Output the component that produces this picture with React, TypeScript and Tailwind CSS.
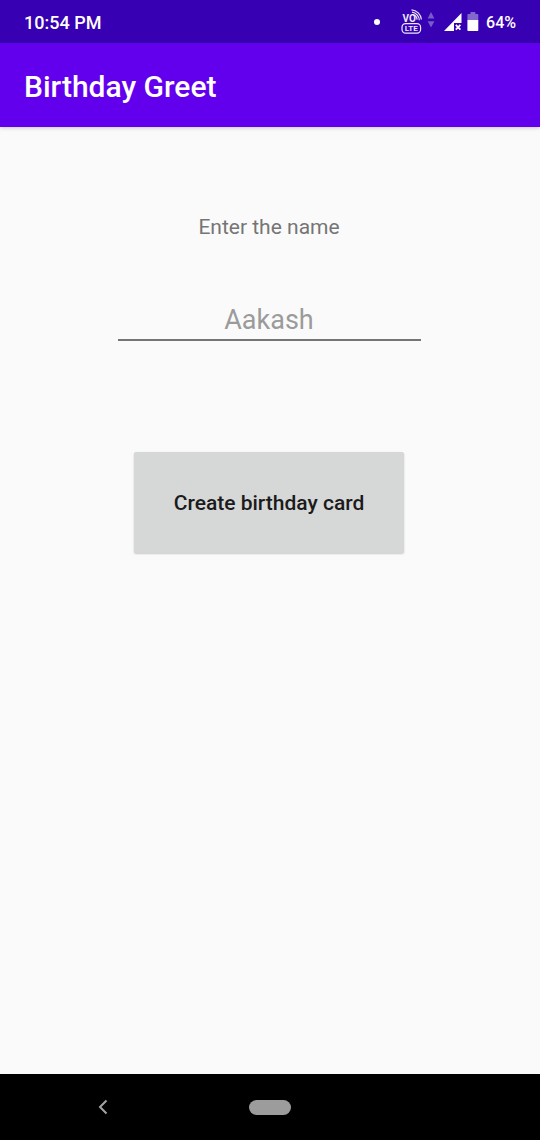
import { useState } from "react";

function VolteIcon() {
  return (
    <svg width="22" height="26" viewBox="0 0 22 26" fill="none" aria-label="VoLTE">
      <text x="1.5" y="13" fontSize="10" fontWeight="700" fill="#ece6fa" fontFamily="Roboto, sans-serif">
        VO
      </text>
      <path d="M12 5.6a5.6 5.6 0 0 1 4.1 5" stroke="#ece6fa" strokeWidth="1.2" />
      <path d="M11 3.2a8.2 8.2 0 0 1 7.3 8" stroke="#ece6fa" strokeWidth="1.2" />
      <path d="M10.5 0.9a10.6 10.6 0 0 1 9.9 9.6" stroke="#ece6fa" strokeWidth="1.2" />
      <rect x="1" y="14.6" width="18.6" height="9.6" rx="3.6" stroke="#ece6fa" strokeWidth="1.2" />
      <text x="10.3" y="22.2" textAnchor="middle" fontSize="8" fontWeight="700" fill="#ece6fa" fontFamily="Roboto, sans-serif">
        LTE
      </text>
    </svg>
  );
}

function DataArrowsIcon() {
  return (
    <svg width="8" height="18" viewBox="0 0 8 18" fill="#765bc9" aria-hidden="true">
      <path d="M4 1l3.4 6.5H.6zM4 16.5L.6 10.2h6.8z" />
    </svg>
  );
}

function SignalIcon() {
  return (
    <svg width="18" height="18" viewBox="0 0 18 18" aria-hidden="true">
      <path d="M17.5 0v10H10v8H0z" fill="#fff" />
      <path d="M11.8 11.8l4.6 4.8M16.4 11.8l-4.6 4.8" stroke="#fff" strokeWidth="1.7" />
    </svg>
  );
}

function BatteryIcon() {
  return (
    <svg width="12" height="20" viewBox="0 0 12 20" aria-hidden="true">
      <path d="M3.5 0h4.8v2h2c.6 0 1 .4 1 1v5H.4V3c0-.6.4-1 1-1h2.1z" fill="#8268ce" />
      <path d="M.4 8h10.9v10c0 .6-.4 1-1 1H1.4c-.6 0-1-.4-1-1z" fill="#fff" />
    </svg>
  );
}

function StatusBar() {
  return (
    <div className="flex h-[43px] items-center justify-between bg-[#3700b3] px-6 pt-px text-lg font-medium text-white">
      <span className="pt-px">10:54 PM</span>
      <div className="flex items-center">
        <span className="mr-[21px] size-[6px] rounded-full bg-white" />
        <span className="flex pb-px">
          <VolteIcon />
        </span>
        <span className="ml-1 mr-[9px] flex pb-1">
          <DataArrowsIcon />
        </span>
        <SignalIcon />
        <span className="ml-[5px] mr-[7px] flex">
          <BatteryIcon />
        </span>
        <span className="pt-px text-base">64%</span>
      </div>
    </div>
  );
}

function NavigationBar() {
  return (
    <nav className="grid h-[66px] grid-cols-3 place-items-center bg-black px-5">
      <button type="button" aria-label="Back" className="p-3">
        <svg width="10" height="16" viewBox="0 0 10 16" fill="none" stroke="#a3a3a3" strokeWidth="2">
          <path d="M8.5 1.5L2 8l6.5 6.5" />
        </svg>
      </button>
      <button type="button" aria-label="Home" className="h-[15px] w-[42px] rounded-full bg-[#9c9c9c]" />
    </nav>
  );
}

export default function App() {
  const [name, setName] = useState("");

  return (
    <div className="flex min-h-screen flex-col bg-[#fafafa] font-[Roboto,sans-serif]">
      <StatusBar />
      <header className="flex h-[84px] items-center bg-[#6200ee] px-6 pb-px shadow-[0_1px_4px_rgba(0,0,0,0.2)]">
        <h1 className="pt-1 text-[30px] leading-9 font-medium text-white">Birthday Greet</h1>
      </header>
      <main className="flex flex-1 flex-col items-center pl-6 pr-[26px] pt-[86px]">
        <label htmlFor="name" className="text-[21px] leading-7 text-[#757575]">
          Enter the name
        </label>
        <input
          id="name"
          type="text"
          value={name}
          onChange={(event) => setName(event.target.value)}
          placeholder="Aakash"
          className="mt-[58px] h-[42px] w-full max-w-[303px] border-b-2 border-[#757575] bg-transparent pt-[2px] text-center text-[27px] text-[#212121] outline-none placeholder:text-[#9b9b9b]"
        />
        <button
          type="button"
          className="mt-[111px] h-[101px] w-full max-w-[270px] rounded-[2px] bg-[#d6d7d7] pt-[2px] text-[21px] font-medium text-[#1b1b1b] shadow-[0_1px_2px_rgba(0,0,0,0.2)]"
        >
          Create birthday card
        </button>
      </main>
      <NavigationBar />
    </div>
  );
}
